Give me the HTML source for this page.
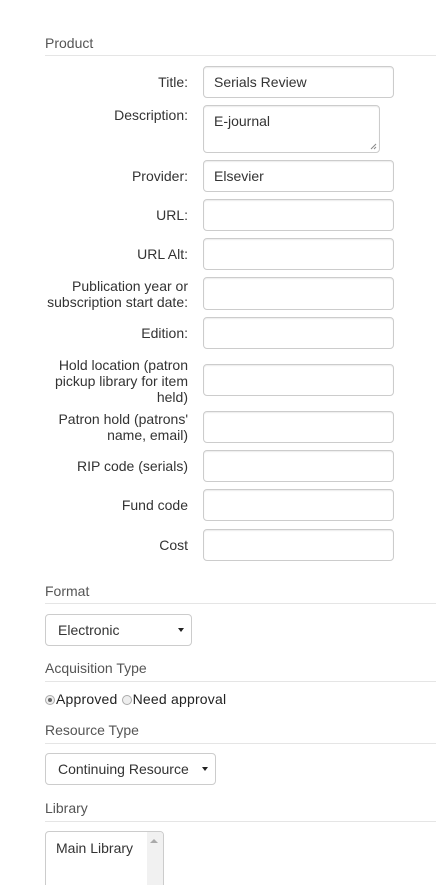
<!DOCTYPE html>
<html style="height:885px;overflow:hidden"><head><meta charset="utf-8"><style>
*{box-sizing:border-box;margin:0;padding:0}
body{width:436px;height:885px;background:#fff;font-family:"Liberation Sans",Arial,sans-serif;font-size:14px;color:#333;position:relative;overflow:hidden}
.h{position:absolute;left:45px;color:#555;font-size:14px;line-height:20px}
.ln{position:absolute;left:45px;right:0;height:1px;background:#e5e5e5}
.lb{position:absolute;right:248px;text-align:right;line-height:16px;color:#333;width:160px}
.in{position:absolute;left:203px;width:191px;height:32px;border:1px solid #ccc;border-radius:4px;box-shadow:inset 0 1px 1px rgba(0,0,0,.075);padding:7px 10px;line-height:16px;color:#333}
.sel{position:absolute;left:45px;height:32px;border:1px solid #ccc;border-radius:4px;padding:7px 12px;line-height:16px;color:#333}
.sel .ar{position:absolute;right:7px;top:13px;width:0;height:0;border-left:3px solid transparent;border-right:3px solid transparent;border-top:4px solid #222}
.rd{display:inline-block;width:10px;height:10px;border:1px solid #aaa;border-radius:50%;background:#eee;vertical-align:-1px;position:relative;margin-right:1px}
</style></head><body>
<div class="h" style="top:33px">Product</div><div class="ln" style="top:55px"></div>

<div class="lb" style="top:74px">Title:</div><div class="in" style="top:66px">Serials Review</div>
<div class="lb" style="top:107px">Description:</div>
<div class="in" style="top:105px;width:177px;height:48px;padding-top:7px">E-journal
<svg style="position:absolute;right:2px;bottom:2px" width="7" height="7"><path d="M1 6L6 1M4 6L6 4" stroke="#888" stroke-width="1"/></svg></div>
<div class="lb" style="top:168px">Provider:</div><div class="in" style="top:160px">Elsevier</div>
<div class="lb" style="top:207px">URL:</div><div class="in" style="top:199px"></div>
<div class="lb" style="top:246px">URL Alt:</div><div class="in" style="top:238px"></div>
<div class="lb" style="top:278px">Publication year or subscription start date:</div><div class="in" style="top:277px;height:33px"></div>
<div class="lb" style="top:325px">Edition:</div><div class="in" style="top:317px"></div>
<div class="lb" style="top:357px">Hold location (patron pickup library for item held)</div><div class="in" style="top:364px"></div>
<div class="lb" style="top:411px">Patron hold (patrons' name, email)</div><div class="in" style="top:411px"></div>
<div class="lb" style="top:458px;width:180px">RIP code (serials)</div><div class="in" style="top:450px"></div>
<div class="lb" style="top:497px">Fund code</div><div class="in" style="top:489px"></div>
<div class="lb" style="top:537px">Cost</div><div class="in" style="top:529px"></div>

<div class="h" style="top:581px">Format</div><div class="ln" style="top:603px"></div>
<div class="sel" style="top:614px;width:147px">Electronic<span class="ar"></span></div>

<div class="h" style="top:658px">Acquisition Type</div><div class="ln" style="top:681px"></div>
<div style="position:absolute;left:45px;top:690px;line-height:18px;color:#222;letter-spacing:0.2px"><span class="rd"><span style="position:absolute;left:2px;top:2px;width:4px;height:4px;border-radius:50%;background:#666"></span></span>Approved <span class="rd"></span>Need approval</div>

<div class="h" style="top:720px">Resource Type</div><div class="ln" style="top:743px"></div>
<div class="sel" style="top:753px;width:171px">Continuing Resource<span class="ar"></span></div>

<div class="h" style="top:798px">Library</div><div class="ln" style="top:821px"></div>
<div style="position:absolute;left:45px;top:831px;width:119px;height:80px;border:1px solid #ccc;border-radius:4px;overflow:hidden">
<div style="position:absolute;left:10px;top:8px;line-height:16px;color:#333">Main Library</div>
<div style="position:absolute;right:0;top:0;width:16px;height:100%;background:#f1f1f1"></div>
<div style="position:absolute;right:5px;top:7px;width:0;height:0;border-left:4px solid transparent;border-right:4px solid transparent;border-bottom:4px solid #aaa"></div>
</div>
</body></html>
